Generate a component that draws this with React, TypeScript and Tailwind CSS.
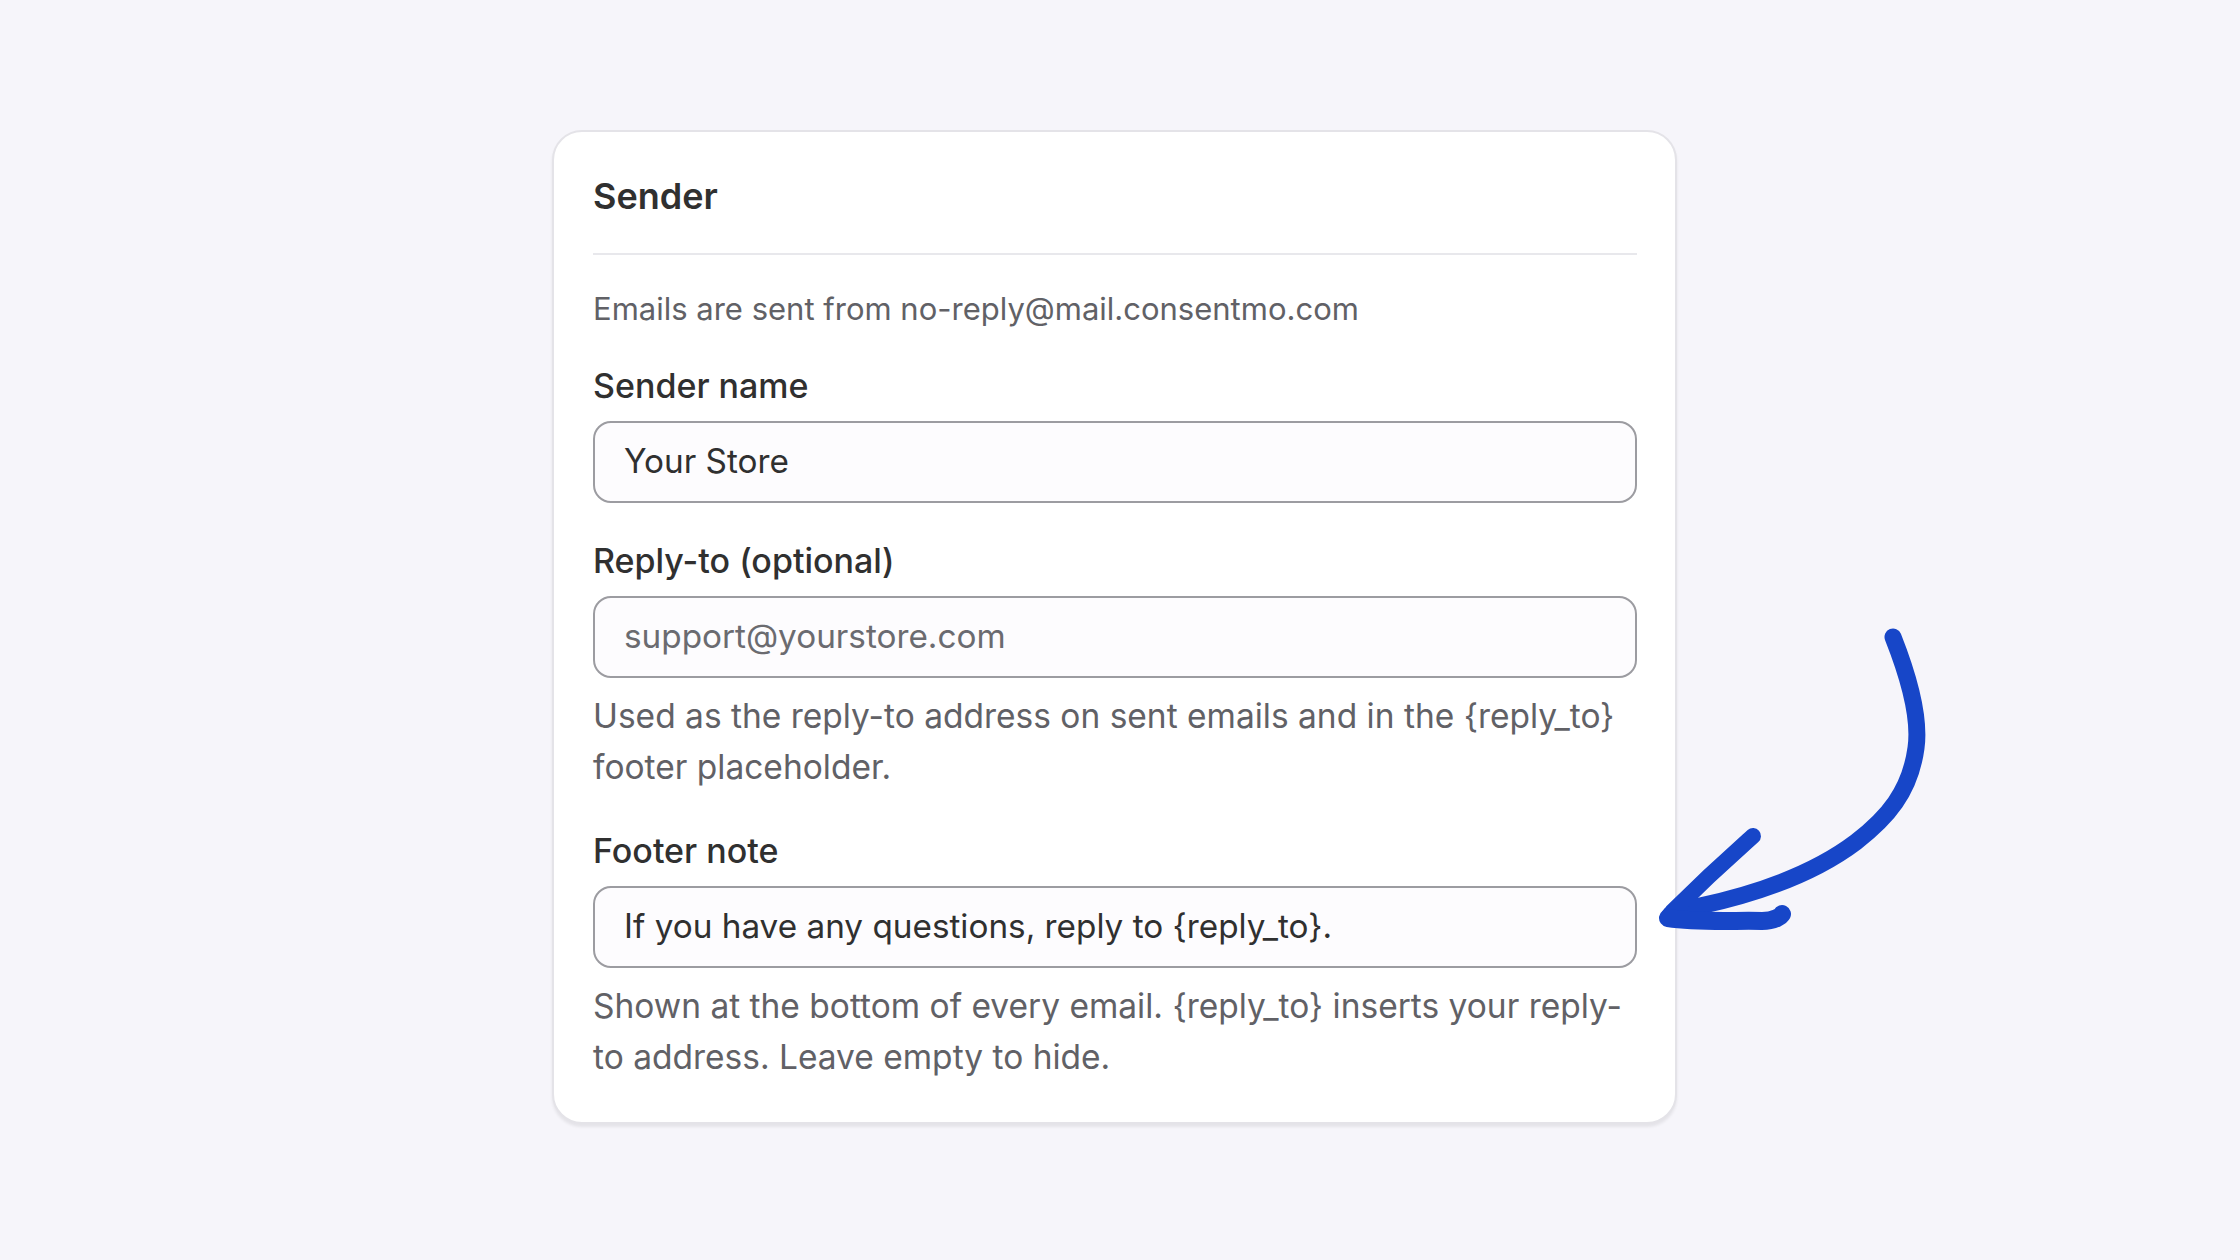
import React from "react";

const font = { fontFamily: "Inter, 'Noto Sans', sans-serif" };

function Field({
  label,
  value,
  placeholder,
  help,
}: {
  label: string;
  value?: string;
  placeholder?: string;
  help?: string[];
}) {
  return (
    <div className="flex flex-col">
      <label className="text-[34px] leading-[50px] font-medium text-[#303030]">{label}</label>
      <div className="mt-[10px] h-[82px] rounded-[18px] border-[2px] border-[#9c9ca1] bg-[#fdfcfe] px-[29px] flex items-center">
        {value ? (
          <span className="text-[33.3px] text-[#303030]">{value}</span>
        ) : (
          <span className="text-[33.3px] text-[#6b6b70]">{placeholder}</span>
        )}
      </div>
      {help && (
        <div className="mt-[13px] text-[33.5px] leading-[51px] text-[#616166]">
          {help.map((line) => (
            <div key={line} className="whitespace-nowrap">{line}</div>
          ))}
        </div>
      )}
    </div>
  );
}

function CurvedArrow() {
  return (
    <svg
      className="absolute left-0 top-0 pointer-events-none"
      width="2240"
      height="1260"
      viewBox="0 0 2240 1260"
      fill="none"
    >
      <g stroke="#1746c8" strokeLinecap="round" strokeLinejoin="round">
        <path
          d="M1893 637 C1910 680 1920 720 1916 748 C1910 792 1887 818 1856 842 C1815 873 1760 893 1700 906 C1688 909 1678 912 1670 915"
          strokeWidth="17"
        />
        <path d="M1753 836 C1735 852 1713 871 1672 912" strokeWidth="16" />
        <path d="M1668 918 C1700 923 1740 920 1762 921 C1775 921 1781 916 1782 914" strokeWidth="18" />
      </g>
    </svg>
  );
}

export default function App() {
  return (
    <div className="relative w-[2240px] h-[1260px] bg-[#f6f5fa] overflow-hidden" style={font}>
      <div className="ml-[552px] pt-[130px]">
        <div className="w-[1125px] rounded-[30px] border-[2px] border-[#e4e3e8] bg-white shadow-[0_3px_3px_rgba(0,0,0,0.07)] pl-[39px] pr-[38px] pt-[39px] pb-[39px]">
          <h2 className="text-[36px] leading-[50px] font-semibold text-[#303030]">Sender</h2>
          <div className="mt-[32px] h-[2px] bg-[#e8e8ec]" />
          <p className="mt-[29px] text-[31px] leading-[50px] text-[#616166]">
            Emails are sent from no-reply@mail.consentmo.com
          </p>
          <div className="mt-[27px]">
            <Field label="Sender name" value="Your Store" />
          </div>
          <div className="mt-[33px]">
            <Field
              label="Reply-to (optional)"
              placeholder="support@yourstore.com"
              help={[
                "Used as the reply-to address on sent emails and in the {reply_to}",
                "footer placeholder.",
              ]}
            />
          </div>
          <div className="mt-[33px]">
            <Field
              label="Footer note"
              value="If you have any questions, reply to {reply_to}."
              help={[
                "Shown at the bottom of every email. {reply_to} inserts your reply-",
                "to address. Leave empty to hide.",
              ]}
            />
          </div>
        </div>
      </div>
      <CurvedArrow />
    </div>
  );
}
